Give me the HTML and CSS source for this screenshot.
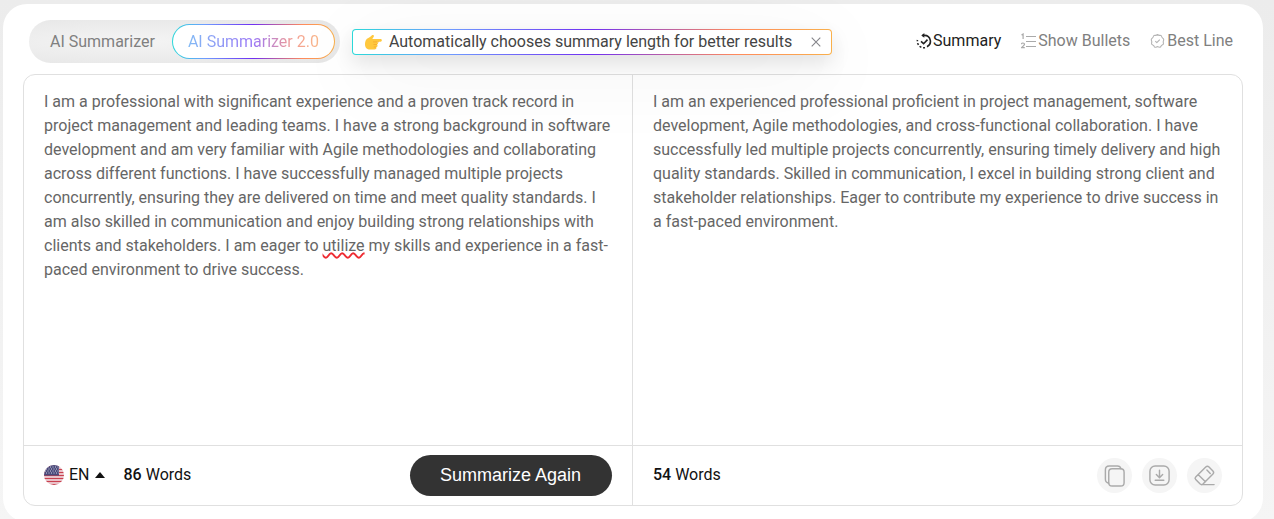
FILE: index.html
```html
<!DOCTYPE html>
<html lang="en">
<head>
<meta charset="utf-8">
<meta name="viewport" content="width=device-width, initial-scale=1">
<title>AI Summarizer</title>
<link rel="stylesheet" href="styles.css">
</head>
<body>
<main class="card">
  <header class="toolbar">
    <div class="versions">
      <button class="version" type="button">AI Summarizer</button>
      <button class="version version-active" type="button"><span class="gradient-text">AI Summarizer 2.0</span></button>
    </div>
    <div class="tip">
      <svg class="hand" viewBox="0 0 17 15" aria-hidden="true">
        <path d="M1 5C2 3 4 3 5 2L7 .3C8.300-.4 9.500.8 8.600 1.900L7.300 4H15.500C17.300 4 17.300 6.700 15.500 6.700H12C13.500 7.500 13.200 9.300 12 9.500C13 10.400 12.500 11.900 11.300 12C11.800 13.500 11 14.500 9.500 14.500H5C2 14.500 0 12.500 0 9.500C0 7.500.4 6 1 5Z" fill="#ffc83d"/>
        <path d="M8 6.900H14M8.500 9.500H12M8.700 12H11" fill="none" stroke="#f2a52c" stroke-width=".7"/>
      </svg>
      <span class="tip-text">Automatically chooses summary length for better results</span>
      <button class="tip-close" type="button" aria-label="Close">
        <svg viewBox="0 0 10 10" aria-hidden="true"><path d="M.7.7l8.600 8.600M9.300.7L.7 9.300" fill="none" stroke="#85858a" stroke-width="1.100"/></svg>
      </button>
    </div>
    <nav class="modes" aria-label="Output">
      <button class="mode mode-active" type="button">
        <svg viewBox="0 0 16 16" fill="none" stroke="currentColor" stroke-width="1.600" aria-hidden="true"><path d="M6.500 2.400H8.500A6 6 0 0 1 11 13.800"/><path d="M8.300 0V4.800L5.300 2.400Z" fill="currentColor" stroke="none"/><path d="M9 14.700A6.500 6.500 0 0 1 1.500 7" stroke-dasharray="2 1.700"/><path d="M5 8.300L7.600 10.700L11.500 6.600"/></svg>Summary
      </button>
      <button class="mode" type="button">
        <svg viewBox="0 0 16 16" fill="none" stroke="#aaa" stroke-width="1.200" aria-hidden="true"><path d="M5 3.500H15M5 8.500H15M5 13.500H15M.5 2L2.100 1V6M.5 11.200Q.5 10 1.900 10Q3.500 10 3.500 11.200Q3.500 12 .5 14.600H3.800"/></svg>Show Bullets
      </button>
      <button class="mode" type="button">
        <svg viewBox="1 0 15 16" fill="none" stroke="#b4b4b4" stroke-width="1.100" stroke-linejoin="round" aria-hidden="true"><path d="M8 1.500Q9.200 2.700 10.600 2.300Q11.900 2.200 12.200 3.700Q12.500 5 13.900 5.700Q14.600 6.700 13.900 8Q13.400 9 14 10.300Q14 11.600 12.700 12Q11.700 12.300 11.200 13.800Q10.100 14.600 9 13.900Q8 13.400 7 13.900Q5.800 14.600 4.900 13.800Q4.400 12.300 3.300 12Q2 11.600 2 10.300Q2.600 9 2.100 8Q1.400 6.700 2.100 5.700Q3.500 5 3.800 3.700Q4.100 2.200 5.400 2.300Q6.800 2.700 8 1.500Z"/><path d="M5.800 8.200L7.300 9.700L10.300 6.600"/></svg>Best Line
      </button>
    </nav>
  </header>

  <div class="workspace">
    <section class="pane">
      <div class="copy" role="textbox" aria-multiline="true" aria-label="Your text" contenteditable="true" spellcheck="false">I am a professional with significant experience and a proven track record in project management and leading teams. I have a strong background in software development and am very familiar with Agile methodologies and collaborating across different functions. I have successfully managed multiple projects concurrently, ensuring they are delivered on time and meet quality standards. I am also skilled in communication and enjoy building strong relationships with clients and stakeholders. I am eager to <span class="misspelled">utilize</span> my skills and experience in a fast-paced environment to drive success.</div>
      <footer class="bar">
        <button class="language" type="button">
          <svg class="flag" viewBox="0 0 20 20" aria-hidden="true">
            <defs><clipPath id="round"><circle cx="10" cy="10" r="10"/></clipPath></defs>
            <g clip-path="url(#round)">
              <rect width="20" height="20" fill="#f3edf0"/>
              <path d="M0 1.500H20M0 4.500H20M0 7.500H20M0 10.500H20M0 13.500H20M0 16.500H20M0 19.500H20" stroke="#c9414f" stroke-width="1.600"/>
              <rect width="15" height="10.500" fill="#4a4a7b"/>
              <path d="M1 2H15M2 4H15M1 6H15M2 8H15" stroke="#d5d5e4" stroke-width="1" stroke-dasharray="1 1.500"/>
            </g>
          </svg>
          <span>EN</span>
          <svg class="caret" viewBox="0 0 10 6" aria-hidden="true"><path d="M5 0L10 6H0Z" fill="#111"/></svg>
        </button>
        <p class="count"><b>86</b> Words</p>
        <button class="submit" type="button">Summarize Again</button>
      </footer>
    </section>
    <section class="pane">
      <div class="copy">I am an experienced professional proficient in project management, software development, Agile methodologies, and cross-functional collaboration. I have successfully led multiple projects concurrently, ensuring timely delivery and high quality standards. Skilled in communication, I excel in building strong client and stakeholder relationships. Eager to contribute my experience to drive success in a fast-paced environment.</div>
      <footer class="bar">
        <p class="count"><b>54</b> Words</p>
        <div class="actions">
          <button class="action" type="button" aria-label="Copy"><svg viewBox="0 0 24 24" aria-hidden="true"><rect x="6" y="5" width="16" height="18" rx="3.500"/><path d="M6 20Q2.500 19.500 2.500 16V6Q2.500 2 6.500 2H15Q18 2 18.800 5"/></svg></button>
          <button class="action" type="button" aria-label="Download"><svg viewBox="0 0 24 24" aria-hidden="true"><rect x="2" y="2" width="20" height="20" rx="5.500"/><path d="M12 6.500V14M8.700 11L12 14.300L15.300 11M7.500 17H16.500"/></svg></button>
          <button class="action" type="button" aria-label="Clear"><svg viewBox="0 0 24 24" aria-hidden="true"><path d="M2.800 13.600L13.300 3.100Q15 1.500 16.700 3.100L20.800 7.200Q22.300 8.900 20.800 10.500L10.400 20.900Q9 22.200 7.500 20.900L2.800 16.200Q1.500 14.900 2.800 13.600ZM5.500 11.300L13 18.500M14.500 6.300L18 9.800M9 21.500H22"/></svg></button>
        </div>
      </footer>
    </section>
  </div>
</main>
</body>
</html>
```
FILE: styles.css
```css
* {
  box-sizing: border-box;
}

:root {
  --rainbow: linear-gradient(90deg, #2bd9d9 0%, #6f9cff 20%, #702ff2 50%, #ff8a5c 80%, #f9b04b 100%);
  --line: #e0e0e0;
}

body {
  margin: 0;
  padding: 4px 11px 0 3px;
  min-height: 100vh;
  overflow: hidden;
  background: linear-gradient(180deg, #ececec, #f5f5f5);
  font: 16px/24px Roboto, sans-serif;
  color: #111;
}

button {
  margin: 0;
  padding: 0;
  border: 0;
  background: none;
  font: inherit;
  color: inherit;
  cursor: pointer;
}

svg {
  display: block;
  flex: none;
}

.card {
  padding: 16px 20px;
  border-radius: 24px;
  background: #fff;
}

.toolbar {
  display: flex;
  align-items: flex-start;
  padding: 0 10px 11px 6px;
}

.versions {
  display: flex;
  padding: 4px 5px;
  border-radius: 22px;
  background: radial-gradient(ellipse at 35% 50%, #f4f4f4, #e5e5e5);
}

.version {
  height: 35px;
  padding: 0 17px 0 16px;
  color: #808080;
}

.version-active {
  padding: 0 15px;
  border: 1px solid transparent;
  border-radius: 18px;
  background: linear-gradient(#fff, #fff) padding-box, var(--rainbow) border-box;
}

.gradient-text {
  background: linear-gradient(90deg, #82baf5, #9b76f6 50%, #f39d92 80%, #f9b789);
  background-clip: text;
  color: transparent;
}

.tip {
  position: relative;
  display: flex;
  align-items: center;
  height: 26px;
  margin: 9px 0 0 12px;
  padding: 0 10px 0 12px;
  border: 1px solid transparent;
  border-radius: 4px;
  background: linear-gradient(#fff, #fff) padding-box, var(--rainbow) border-box;
  box-shadow: 0 8px 20px rgba(0, 0, 0, .1), 0 16px 80px rgba(0, 0, 0, .08);
  color: #444;
}

.hand {
  width: 17px;
  height: 15px;
  margin-right: 7px;
}

.tip-close {
  margin-left: 19px;
}

.tip-close svg {
  width: 10px;
  height: 10px;
}

.modes {
  display: flex;
  gap: 20px;
  margin: 9px 0 0 auto;
}

.mode {
  display: flex;
  align-items: center;
  gap: 1px;
  color: #808080;
}

.mode svg {
  width: 16px;
  height: 16px;
}

.mode-active {
  color: #222;
}

.workspace {
  display: grid;
  grid-template-columns: 1fr 1fr;
  border: 1px solid var(--line);
  border-radius: 12px;
}

.pane {
  display: flex;
  flex-direction: column;
}

.pane:first-child {
  border-right: 1px solid var(--line);
}

.copy {
  min-height: 370px;
  padding: 15px 20px;
  color: #666;
  outline: none;
}

.misspelled {
  text-decoration: underline wavy #ee2b32 2px;
  text-decoration-skip-ink: none;
  text-underline-offset: 1px;
}

.bar {
  display: flex;
  align-items: center;
  height: 60px;
  padding: 0 20px;
  border-top: 1px solid var(--line);
}

.language {
  display: flex;
  align-items: center;
  gap: 5px;
  margin-right: 19px;
}

.flag {
  width: 20px;
  height: 20px;
}

.caret {
  width: 10px;
  height: 6px;
}

.count {
  margin: 0;
}

.language,
.count {
  padding-bottom: 2px;
}

.count b {
  font-weight: 500;
}

.submit {
  height: 41px;
  margin-left: auto;
  padding: 0 31px 2px 30px;
  border-radius: 21px;
  background: #333;
  color: #fff;
  font: 18px/24px "Liberation Sans", Arial, sans-serif;
}

.actions {
  display: flex;
  gap: 10px;
  margin-left: auto;
}

.action {
  display: grid;
  place-items: center;
  width: 35px;
  height: 35px;
  border-radius: 50%;
  background: #f5f5f5;
}

.action svg {
  width: 23px;
  height: 23px;
  fill: none;
  stroke: #aaa;
  stroke-width: 1.5;
  stroke-linecap: round;
  stroke-linejoin: round;
}
```
